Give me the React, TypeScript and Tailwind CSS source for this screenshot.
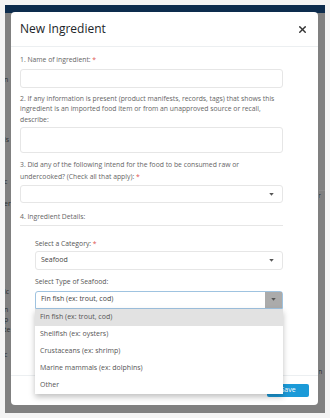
import { X } from "lucide-react";

const seafoodTypes = [
  "Fin fish (ex: trout, cod)",
  "Shellfish (ex: oysters)",
  "Crustaceans (ex: shrimp)",
  "Marine mammals (ex: dolphins)",
  "Other",
];

function Caret() {
  return (
    <svg width="5" height="3" viewBox="0 0 6 4" className="text-[#555]">
      <path d="M0 0 L6 0 L3 3.5 Z" fill="currentColor" />
    </svg>
  );
}

function Req() {
  return <span className="text-[#e0554f]"> *</span>;
}

// faint fragments of the page behind the overlay
const leftBits = [
  { h: 72, t: "n" },
  { h: 60, t: "is" },
  { h: 42, t: "c" },
  { h: 22, t: "er" },
  { h: 88, t: "ic" },
  { h: 18, t: "n" },
  { h: 10, t: "p" },
  { h: 10, t: "te" },
  { h: 25, t: "c" },
];

export default function App() {
  return (
    <div className="h-[418px] w-[330px] bg-[#f4f4f4] p-[5px] font-['Open_Sans',sans-serif]">
      <div className="relative h-[408px] w-[320px] overflow-hidden bg-[#808080]">
        <div className="h-[8px] bg-[#0d2c4d]" />
        <div className="flex justify-between">
          <div className="flex w-[6px] flex-col overflow-hidden text-[7px] leading-[10px] text-[#2e2e2e]">
            {leftBits.map((b, i) => (
              <div key={i} className="flex flex-col justify-end" style={{ height: b.h }}>
                <span className="-ml-[1px] whitespace-nowrap">{b.t}</span>
              </div>
            ))}
          </div>
          <div className="flex w-[6px] flex-col overflow-hidden text-[7px] leading-[10px] text-[#2e2e2e]">
            <div className="h-[178px] border-b border-[#8a8a8a]" />
            <span className="-ml-[1px]">r</span>
            <div className="h-[166px]" />
            <span className="-ml-[1px]">n</span>
          </div>
        </div>

        <div className="absolute left-[6px] top-[7px] flex h-[393px] w-[307px] flex-col rounded-[4px] bg-white">
          <div className="flex h-[35px] items-center justify-between border-b border-[#eceff1] pl-[9px] pr-[10px]">
            <h2 className="text-[12px] font-medium text-[#212529]">New Ingredient</h2>
            <X className="h-[11px] w-[11px] text-[#333]" strokeWidth={3} />
          </div>

          <div className="flex w-[272px] flex-1 flex-col pl-[9px] pt-[8px] text-[6.8px] leading-[10.5px] text-[#666]">
            <p>
              1. Name of ingredient:<Req />
            </p>
            <div className="mt-[3px] h-[19px] rounded-[3px] border border-[#e6e6e6]" />

            <p className="mt-[6px]">
              2. If any information is present (product manifests, records, tags) that shows this
              <br />
              ingredient is an imported food item or from an unapproved source or recall,
              <br />
              describe:
            </p>
            <div className="mt-[2px] h-[26px] rounded-[3px] border border-[#e6e6e6]" />

            <p className="mt-[6px] leading-[11.5px]">
              3. Did any of the following intend for the food to be consumed raw or
              <br />
              undercooked? (Check all that apply):<Req />
            </p>
            <div className="mt-[3px] flex h-[18px] items-center justify-end rounded-[3px] border border-[#e6e6e6] pr-[8px]">
              <Caret />
            </div>

            <p className="mt-[9px]">4. Ingredient Details:</p>
            <div className="mt-[2px] border-b border-[#e6e6e6]" />

            <div className="relative pl-[15px]">
              <p className="mt-[13px] text-[#555]">
                Select a Category:<Req />
              </p>
              <div className="mt-[2px] flex h-[19px] items-center justify-between rounded-[3px] border border-[#e6e6e6] pl-[5px] pr-[8px] text-[7px] text-[#444]">
                <span>Seafood</span>
                <Caret />
              </div>

              <p className="mt-[7px] text-[#555]">Select Type of Seafood:</p>
              <div className="mt-[3px] flex h-[18px] items-center justify-between rounded-t-[3px] border border-[#9fc3e0] pl-[5px] text-[7px] text-[#444]">
                <span>Fin fish (ex: trout, cod)</span>
                <div className="flex h-full w-[17px] items-center justify-center bg-[#ababab]">
                  <Caret />
                </div>
              </div>

              <div className="absolute left-[15px] right-0 top-full z-10 flex flex-col bg-white text-[7px] text-[#555] shadow-[0_3px_6px_rgba(0,0,0,0.25)]">
                {seafoodTypes.map((t, i) => (
                  <div
                    key={t}
                    className={`flex h-[17px] items-center pl-[5px] ${i === 0 ? "bg-[#e2e2e2]" : ""}`}
                  >
                    {t}
                  </div>
                ))}
              </div>
            </div>
          </div>

          <div className="flex h-[30px] items-center justify-end gap-[16px] border-t border-[#eceff1] pr-[9px]">
            <span className="text-[7px] text-[#999]">Cancel</span>
            <button className="h-[13px] w-[42px] rounded-[2px] bg-[#1b9ad8] text-[7px] text-white">
              Save
            </button>
          </div>
        </div>
      </div>
    </div>
  );
}
